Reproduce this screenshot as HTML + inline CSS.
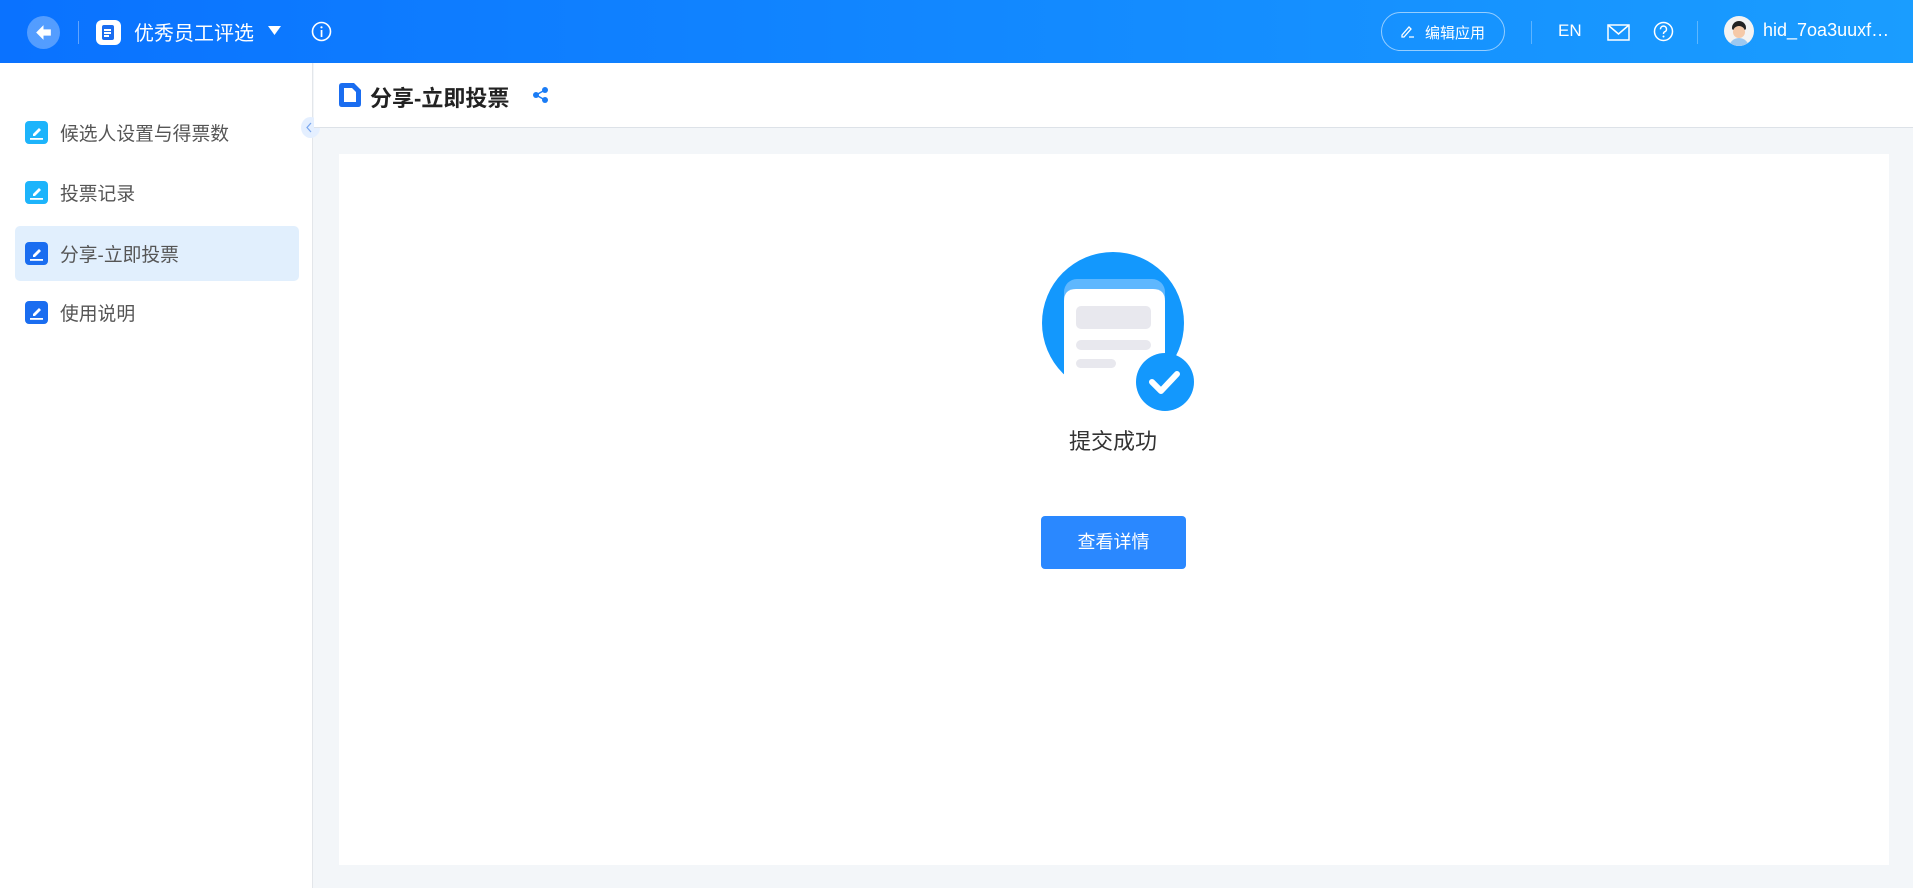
<!DOCTYPE html>
<html><head><meta charset="utf-8"><style>
*{margin:0;padding:0;box-sizing:border-box}
body{width:1913px;height:888px;overflow:hidden;font-family:"Liberation Sans","Noto Sans CJK SC",sans-serif;background:#f3f6f9;position:relative}
.hdr{position:absolute;left:0;top:0;width:1913px;height:63px;background:linear-gradient(90deg,#0a72ff,#1a9dff)}
.a{position:absolute}
.side{position:absolute;left:0;top:63px;width:313px;height:825px;background:#fff;border-right:1px solid #e3e6ea}
.item{position:absolute;left:15px;width:284px;height:55px;border-radius:5px}
.item svg{position:absolute;left:10px;top:16px}
.item span{position:absolute;left:45px;top:14px;font-size:18.8px;color:#555}
</style></head><body>
<div class="hdr">
 <div class="a" style="left:27px;top:16px;width:33px;height:33px;border-radius:50%;background:rgba(255,255,255,.3)"></div>
 <svg class="a" style="left:33px;top:22px" width="21" height="21" viewBox="0 0 20 20"><path d="M3 10 L10 3 L10 7 L17 7 L17 13 L10 13 L10 17 Z" fill="#fff"/></svg>
 <div class="a" style="left:78px;top:21px;width:1px;height:23px;background:rgba(255,255,255,.35)"></div>
 <div class="a" style="left:96px;top:20px;width:25px;height:25px;border-radius:6px;background:#fff"></div>
 <div class="a" style="left:102px;top:25px;width:12px;height:15px;border-radius:2px;background:#1a6df0"></div>
 <div class="a" style="left:104px;top:29px;width:7px;height:1.5px;background:#fff"></div>
 <div class="a" style="left:104px;top:32px;width:7px;height:1.5px;background:#fff"></div>
 <div class="a" style="left:104px;top:35px;width:5px;height:1.5px;background:#fff"></div>
 <div class="a" style="left:134px;top:17px;font-size:20px;color:#fff">优秀员工评选</div>
 <svg class="a" style="left:268px;top:26px" width="13" height="10"><path d="M0 0H13L6.5 9Z" fill="#fff"/></svg>
 <svg class="a" style="left:311px;top:21px" width="21" height="21" viewBox="0 0 21 21"><circle cx="10.5" cy="10.5" r="9" fill="none" stroke="#fff" stroke-width="1.6"/><rect x="9.7" y="9" width="1.7" height="7" fill="#fff"/><circle cx="10.5" cy="6.3" r="1.1" fill="#fff"/></svg>
 <div class="a" style="left:1381px;top:12px;width:124px;height:39px;border:1px solid rgba(255,255,255,.55);border-radius:20px"></div>
 <svg class="a" style="left:1400px;top:24px" width="15" height="15" viewBox="0 0 15 15"><path d="M2 11 L9 3 L11 5 L4 13 L2 13 Z M9 13 H14" fill="none" stroke="#fff" stroke-width="1.3"/></svg>
 <div class="a" style="left:1425px;top:22px;font-size:15px;color:#fff">编辑应用</div>
 <div class="a" style="left:1531px;top:21px;width:1px;height:23px;background:rgba(255,255,255,.3)"></div>
 <div class="a" style="left:1558px;top:21px;font-size:17px;color:#fff">EN</div>
 <svg class="a" style="left:1607px;top:24px" width="23" height="17"><rect x="1" y="1" width="21" height="15" fill="none" stroke="#fff" stroke-width="1.5"/><path d="M1 1 L11.5 10 L22 1" fill="none" stroke="#fff" stroke-width="1.5"/></svg>
 <svg class="a" style="left:1653px;top:21px" width="21" height="21" viewBox="0 0 21 21"><circle cx="10.5" cy="10.5" r="9" fill="none" stroke="#fff" stroke-width="1.5"/><path d="M7.5 8.3 A3 3 0 1 1 11.3 11 Q10.5 11.5 10.5 13" fill="none" stroke="#fff" stroke-width="1.5"/><circle cx="10.5" cy="15.5" r="1" fill="#fff"/></svg>
 <div class="a" style="left:1697px;top:21px;width:1px;height:23px;background:rgba(255,255,255,.3)"></div>
 <div class="a" style="left:1724px;top:16px;width:30px;height:30px;border-radius:50%;background:#f3f3f3;overflow:hidden"><div class="a" style="left:8px;top:5px;width:14px;height:9px;border-radius:7px 7px 2px 2px;background:#222"></div><div class="a" style="left:9px;top:10px;width:12px;height:12px;border-radius:50%;background:#f5c9a8"></div><div class="a" style="left:5px;top:22px;width:20px;height:10px;border-radius:10px 10px 0 0;background:#9cc8f0"></div></div>
 <div class="a" style="left:1763px;top:20px;font-size:18px;color:#fff">hid_7oa3uuxf…</div>
</div>
<div class="side">
 <div class="item" style="top:42px"><svg width="23" height="23"><rect width="23" height="23" rx="4" fill="#1db4fb"/><path d="M8 15 L8 13 L14 7 L16 9 L10 15 Z" fill="#fff"/><rect x="5" y="17" width="13" height="1.8" fill="#fff"/></svg><span>候选人设置与得票数</span></div>
 <div class="item" style="top:102px"><svg width="23" height="23"><rect width="23" height="23" rx="4" fill="#1db4fb"/><path d="M8 15 L8 13 L14 7 L16 9 L10 15 Z" fill="#fff"/><rect x="5" y="17" width="13" height="1.8" fill="#fff"/></svg><span>投票记录</span></div>
 <div class="item" style="top:163px;background:#e1effd"><svg width="23" height="23"><rect width="23" height="23" rx="4" fill="#1a6df0"/><path d="M8 15 L8 13 L14 7 L16 9 L10 15 Z" fill="#fff"/><rect x="5" y="17" width="13" height="1.8" fill="#fff"/></svg><span>分享-立即投票</span></div>
 <div class="item" style="top:222px"><svg width="23" height="23"><rect width="23" height="23" rx="4" fill="#1a6df0"/><path d="M8 15 L8 13 L14 7 L16 9 L10 15 Z" fill="#fff"/><rect x="5" y="17" width="13" height="1.8" fill="#fff"/></svg><span>使用说明</span></div>
</div>
<div class="a" style="left:301px;top:117px;width:19px;height:21px;border-radius:50%;background:#e4efff"></div>
<svg class="a" style="left:305px;top:122px" width="8" height="11"><path d="M6 1 L2 5.5 L6 10" fill="none" stroke="#7aa7ee" stroke-width="1.2"/></svg>
<div class="a" style="left:314px;top:63px;width:1599px;height:65px;background:#fff;border-bottom:1px solid #dde2e8"></div>
<svg class="a" style="left:339px;top:83px" width="22" height="24"><path d="M3 0 H15 L22 7 V21 Q22 24 19 24 H3 Q0 24 0 21 V3 Q0 0 3 0Z" fill="#1a6df0"/><path d="M5 5 H13 L17 9 V19 H5Z" fill="#fff"/></svg>
<div class="a" style="left:370px;top:81px;font-size:22px;font-weight:bold;color:#222">分享-立即投票</div>
<svg class="a" style="left:532px;top:86px" width="18" height="18"><g fill="#1a7cf5"><circle cx="13" cy="4" r="3"/><circle cx="4" cy="9" r="3"/><circle cx="13" cy="14" r="3"/></g><path d="M13 4 L4 9 L13 14" stroke="#1a7cf5" stroke-width="1.5" fill="none"/></svg>
<div class="a" style="left:339px;top:154px;width:1550px;height:711px;background:#fff"></div>
<svg class="a" style="left:1030px;top:240px" width="180" height="180">
 <circle cx="83" cy="83" r="71" fill="#1398fd"/>
 <rect x="34" y="39" width="101" height="120" rx="13" fill="#5eb7fe"/>
 <path d="M34 61 Q34 49 46 49 H123 Q135 49 135 61 V165 H34 Z" fill="#fff"/>
 <rect x="46" y="66" width="75" height="23" rx="5" fill="#e8e8ee"/>
 <rect x="46" y="100" width="75" height="10" rx="5" fill="#e8e8ee"/>
 <rect x="46" y="119" width="40" height="9" rx="4.5" fill="#e8e8ee"/>
 <circle cx="135" cy="142" r="29" fill="#1398fd"/>
 <path d="M122 142 L131 151 L147 134" fill="none" stroke="#fff" stroke-width="6" stroke-linecap="round" stroke-linejoin="round"/>
</svg>
<div class="a" style="left:1013px;top:424px;width:200px;text-align:center;font-size:22px;color:#333">提交成功</div>
<div class="a" style="left:1041px;top:516px;width:145px;height:53px;border-radius:4px;background:#2a88ff;color:#fff;font-size:18px;text-align:center;line-height:53px">查看详情</div>
</body></html>
